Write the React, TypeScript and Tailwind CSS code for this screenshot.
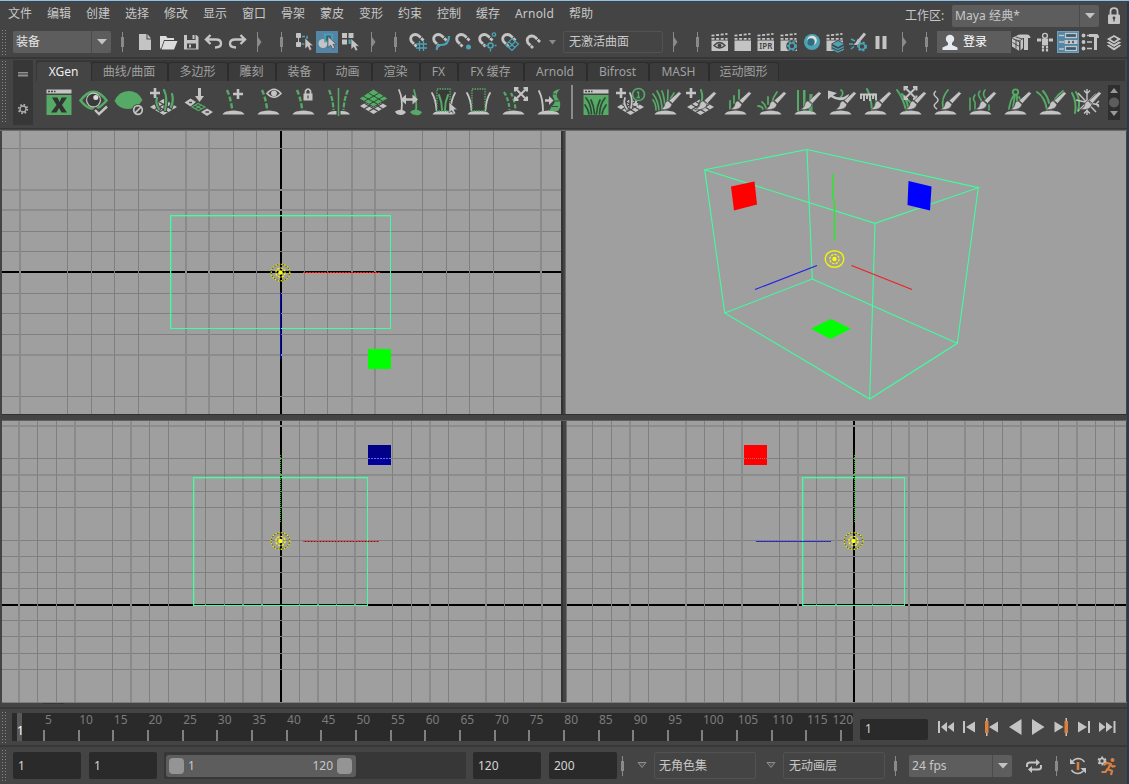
import React from "react";

const G = "#55aa66";
const L = "#c4c4c4";
const T = "#4ba3b5";
const O = "#d9803f";

/* ---------- small building blocks ---------- */

const Grip = () => (
  <svg className="w-[8px] h-full shrink-0" aria-hidden="true">
    <defs>
      <pattern id="grip" width="3" height="3" patternUnits="userSpaceOnUse">
        <rect x="2" y="1" width="1" height="1" fill="#858585" />
      </pattern>
    </defs>
    <rect width="6" height="100%" fill="url(#grip)" />
  </svg>
);

const Divider = () => (
  <svg className="w-[5px] h-[20px] shrink-0" shapeRendering="crispEdges">
    <rect x="2" y="0" width="1" height="20" fill="#8a8a8a" />
    <rect x="1" y="5" width="3" height="10" fill="#8a8a8a" />
  </svg>
);
const Chevron = () => (
  <svg className="w-[5px] h-[20px] shrink-0">
    <rect x="0" y="0" width="1" height="20" fill="#8a8a8a" />
    <path d="M1 5L4.500 10L1 15z" fill="#8a8a8a" />
  </svg>
);
const Slot = ({ children }: { children: React.ReactNode }) => (
  <div className="w-[23px] h-[22px] shrink-0 flex items-center">{children}</div>
);
const DropArrow = () => (
  <div className="w-[20px] h-full border-l border-[#4b4b4b] flex items-center justify-center">
    <svg width="10" height="6"><path d="M0 0H10L5 5.500z" fill="#c4c4c4" /></svg>
  </div>
);

const I = ({ children, on }: { children: React.ReactNode; on?: boolean }) => (
  <Slot>
    <svg width="22" height="22" viewBox="0 0 22 22" fill="none" className={on ? "bg-[#5285a6]" : ""}>{children}</svg>
  </Slot>
);

const Cursor = ({ x, y }: { x: number; y: number }) => (
  <path transform={`translate(${x} ${y})`} d="M0 0V11L2.700 8.600L4.600 12.500L6.800 11.500L5 7.700H8.400z" fill={L} stroke="#444" strokeWidth=".6" />
);
const Magnet = () => (
  <path d="M9.500 15.500L4.500 10.500Q2.500 6.500 5.500 4.300Q9 2.300 12 5L16.500 9.500" stroke={L} strokeWidth="2.800" />
);
const MagnetGaps = () => <path d="M5.800 14.500L9 11.500M12 8.800L15.500 5.500" stroke="#444" strokeWidth="1" />;
const Clap = () => (
  <g>
    <path d="M2.500 4.200L18.500 2.400M2.500 7.400H18.500" stroke={L} strokeWidth="1.800" strokeDasharray="3 1.600" />
    <rect x="2.500" y="9" width="16.500" height="10.500" fill={L} />
  </g>
);
const Gear = ({ x, y, r, c = T }: { x: number; y: number; r: number; c?: string }) => (
  <g transform={`translate(${x} ${y})`}>
    <circle r={r + 1} stroke={c} strokeWidth="2" strokeDasharray="2 1.800" fill="none" />
    <circle r={r} stroke={c} strokeWidth="1.600" fill="#444" />
  </g>
);

/* ---------- top menu ---------- */

const menus = ["文件", "编辑", "创建", "选择", "修改", "显示", "窗口", "骨架", "蒙皮", "变形", "约束", "控制", "缓存", "Arnold", "帮助"];

const MenuBar = () => (
  <div className="h-[25px] flex items-center pl-[8px] pr-[6px] text-[#c8c8c8]">
    <div className="flex gap-[15px] pb-[2px]">
      {menus.map((m) => <span key={m} className={m === "Arnold" ? "w-[39px] tracking-[.2px]" : "w-[24px]"}>{m}</span>)}
    </div>
    <div className="ml-auto flex items-center pt-[3px]">
      <span className="w-[47px]">工作区:</span>
      <div className="w-[147px] h-[22px] bg-[#5d5d5d] rounded-[2px] flex items-center pl-[3px]">
        <span className="flex-1 tracking-[.1px]">Maya 经典*</span>
        <DropArrow />
      </div>
      <svg className="ml-[8px]" width="14" height="18" viewBox="0 0 14 18" fill="none">
        <path d="M3.500 8V4.500Q3.500 1.200 7 1.200T10.500 4.500V8" stroke={L} strokeWidth="1.800" />
        <rect x="1" y="7.500" width="12" height="9.500" rx="1" fill={L} />
        <circle cx="7" cy="11" r="1.400" fill="#444" /><path d="M7 11V14.500" stroke="#444" strokeWidth="1.200" />
      </svg>
    </div>
  </div>
);

/* ---------- status line ---------- */

const StatusLine = () => (
  <div className="h-[30px] flex items-center shrink-0">
    <div className="h-[26px] w-[13px] flex"><Grip /></div>
    <div className="w-[98px] h-[22px] bg-[#5d5d5d] rounded-[2px] flex items-center pl-[3px] text-[#e6e6e6]">
      <span className="flex-1">装备</span>
      <DropArrow />
    </div>
    <div className="w-[22px] flex pl-[9px]"><Divider /></div>
    <I><path d="M6 3H13.500V8.500H18V19H6z" fill={L} /><path d="M14.500 3L18 7.500H14.500z" fill={L} /></I>
    <I><path d="M4 5H10L11.500 7H18V9H8L5 17.500H4z" fill="#dcdcdc" /><path d="M8.500 10H21.500L18 18.500H5.500z" fill="#dcdcdc" /></I>
    <I><path d="M5 4H17.500L19.500 6V18.500H5z" fill={L} /><rect x="8" y="4" width="8.500" height="5" fill="#444" /><rect x="13.500" y="4" width="2" height="4" fill={L} /><rect x="8" y="12.500" width="9" height="5" fill="#444" /><rect x="10" y="13.500" width="2" height="3" fill={L} /></I>
    <I><path d="M8.500 4L4 8.500L8.500 13M4.500 8.500H14Q19 8.500 19 12.500T13 16.500" stroke={L} strokeWidth="2.400" /></I>
    <I><path d="M15.500 4L20 8.500L15.500 13M19.500 8.500H10Q5 8.500 5 12.500T11 16.500" stroke={L} strokeWidth="2.400" /></I>
    <div className="w-[22px] flex pl-[9px]"><Chevron /></div>
    <div className="w-[23px] flex pl-[9px]"><Divider /></div>
    <I>
      <path d="M3.500 2.500H7.500V6.500H3.500zM3.500 11.500H7.500V15.500H3.500z" fill={L} stroke={L} /><path d="M5.500 7V11" stroke={L} />
      <path d="M9 5.500H14V10M8.500 13H12" stroke={T} strokeWidth="1.600" strokeDasharray="3 1.500" /><Cursor x={12} y={7} />
    </I>
    <I on><circle cx="7" cy="12.500" r="4.500" fill={L} /><rect x="9" y="3.500" width="7" height="7" stroke={T} strokeWidth="1.700" fill="#3a6a80" /><Cursor x={12} y={5.5} /></I>
    <I><path d="M3 2H8V7H3zM9.500 2H14.500V7H9.500zM3 8.500H8V13.500H3z" fill={L} /><path d="M9.500 8.500H13V13H9.500z" fill={T} /><Cursor x={12} y={7.5} /></I>
    <div className="w-[22px] flex pl-[9px]"><Chevron /></div>
    <div className="w-[23px] flex pl-[9px]"><Divider /></div>
    <I><Magnet /><MagnetGaps /><path d="M12.500 10V20M16.500 10V20M9 13H20M9 17H20" stroke={T} strokeWidth="1.300" /></I>
    <I><Magnet /><MagnetGaps /><path d="M7 19Q6 14 11 14Q19 14 19 5" stroke={T} strokeWidth="2.200" /></I>
    <I><Magnet /><MagnetGaps /><circle cx="15.500" cy="16" r="2.500" fill={T} /></I>
    <I><Magnet /><MagnetGaps /><circle cx="18" cy="3.500" r="1.700" stroke={T} strokeWidth="1.300" /><circle cx="14.500" cy="14.500" r="2.500" fill="#444" stroke={T} strokeWidth="1.600" /><path d="M14.500 18V20.500M8.500 14.500H11M18.500 14.500H20.500" stroke={T} strokeWidth="1.300" /></I>
    <I><Magnet /><MagnetGaps /><path d="M13 7.500L19.500 13L13 19.500L7 14zM10 11L16 16.500M16.500 10.500L10 16.500" stroke={T} strokeWidth="1.200" /></I>
    <I><g transform="translate(1.500 1.500)"><Magnet /><MagnetGaps /></g></I>
    <div className="w-[18px] flex pl-[4px]"><svg width="8" height="5"><path d="M0 0H7L3.500 4.500z" fill="#8a8a8a" /></svg></div>
    <div className="w-[100px] h-[22px] border border-[#525252] rounded-[2px] flex items-center pl-[5px] text-[#c8c8c8]">无激活曲面</div>
    <div className="w-[25px] flex pl-[10px]"><Chevron /></div>
    <div className="w-[21px] flex pl-[7px]"><Divider /></div>
    <I><g transform="translate(0 .5)"><Clap /><path d="M5 14Q10.500 8 16 14Q10.500 19 5 14z" fill={L} stroke="#444" strokeWidth="1.300" /><circle cx="10.500" cy="14" r="2" fill="#444" /></g></I>
    <I><g transform="translate(0 .5)"><Clap /></g></I>
    <I><g transform="translate(0 .5)"><Clap /><text x="4.300" y="17.500" fontSize="8" fontWeight="600" fill="#444" fontFamily="Noto Sans">IPR</text></g></I>
    <I><g transform="translate(0 .5)"><Clap /><circle cx="14" cy="14.500" r="5.800" fill="#444" /><Gear x={14} y={14.5} r={3} /></g></I>
    <I><circle cx="11" cy="11" r="8" fill={T} /><circle cx="11" cy="9.500" r="4.800" fill="#e0e0e0" /><circle cx="10" cy="11" r="3.700" fill="#2f6f7d" /></I>
    <I><g transform="translate(0 .5)"><Clap /><path d="M7.500 12L14 8.500L20.500 12L20.500 18L14 21.500L7.500 18z" fill="#444" /><path d="M8 12.500L14 9.500L20 12.500L14 15.500z" fill={T} /><path d="M8 15L14 18L20 15M8 17.500L14 20.500L20 17.500" stroke={T} strokeWidth="1.300" /></g></I>
    <I><path d="M18 2.500L12 9.500" stroke={L} strokeWidth="2.800" /><path d="M10.500 8L14 11Q12 15 6 13.500Q9 12.500 10.500 8z" fill={L} /><path d="M4 8L8 10M2 13H6M4 18L7 15.500" stroke={T} strokeWidth="1.600" /><Gear x={15} y={15.5} r={3} /></I>
    <I><path d="M7.500 5V18M14.500 5V18" stroke={L} strokeWidth="4" /></I>
    <div className="w-[22px] flex pl-[9px]"><Chevron /></div>
    <div className="w-[22px] flex pl-[9px]"><Divider /></div>
    <div className="w-[74px] h-[22px] bg-[#5d5d5d] flex items-center gap-[5px] pl-[5px] text-white">
      <svg width="16" height="17" viewBox="0 0 16 17"><circle cx="8" cy="5" r="4.200" fill="#e4e9f2" /><path d="M6 8H10V11L15.500 13.500V16H.5V13.500L6 11z" fill="#e4e9f2" /></svg>
      <span>登录</span>
    </div>
    <I>
      <path d="M1 7L8 3.500L14 5.500L8.500 9.500z" fill={L} /><path d="M1 7V15.500L8.500 20V10.500z" fill={L} /><path d="M1.500 7.500L8.500 11V20M1.500 11.500L8.500 15.500M5 9V17.500M4.500 5.800L11 8" stroke="#444" strokeWidth=".9" />
      <path d="M9.500 9.500L12 8V17L9.500 19.500z" fill={L} />
      <path d="M9 3.500H16Q19 3.500 19.500 7H17V19H13V7H9z" fill={L} />
    </I>
    <I><circle cx="11" cy="4.800" r="2.400" stroke={L} strokeWidth="1.400" /><path d="M3 9H19" stroke={L} strokeWidth="2.800" strokeDasharray="4 .8 6.400 .8 4" /><path d="M8 10H14V14.500H8z" fill={L} /><path d="M9 15V20.500M13 15V20.500" stroke={L} strokeWidth="2.200" strokeDasharray="2.400 .7" /></I>
    <I on><rect x=".5" y=".5" width="21" height="21" stroke="#6da0c0" /><path d="M2 4.500H7M2 11H7M2 18H7" stroke={L} strokeWidth="1.500" /><rect x="8.500" y="2.500" width="11" height="4" fill="#355a72" stroke={L} strokeWidth="1.300" /><rect x="7.500" y="9" width="13" height="4" fill={L} /><path d="M11 10L13 11L11 12M17 10L15 11L17 12" stroke="#444" /><rect x="8.500" y="15.500" width="11" height="4" fill="#355a72" stroke={L} strokeWidth="1.300" /></I>
    <I><g fill={L}><circle cx="3.500" cy="4.500" r="1.900" /><circle cx="3.500" cy="11" r="1.900" /><circle cx="3.500" cy="17.500" r="1.900" /><path d="M9 3H17Q19 3.500 19 7H17V19H14V6H9z" /></g><path d="M7 4.500H10M7 11H12M7 17.500H12" stroke={L} strokeWidth="1.700" /></I>
    <I><path d="M3 14.500L11 10.500L19 14.500L11 20z" fill={L} stroke="#444" /><path d="M3 11.500L11 7L19 11.500L11 16.500z" fill={L} stroke="#444" /><path d="M3 8L11 3.500L19 8L11 13z" fill={L} stroke="#444" /><path d="M7.500 8L11 6L14.500 8L11 10.500z" fill="#444" /></I>
  </div>
);

/* ---------- shelf ---------- */

const tabs: [string, string][] = [
  ["XGen", "w-[54px]"], ["曲线/曲面", "w-[77px]"], ["多边形", "w-[60px]"], ["雕刻", "w-[48px]"], ["装备", "w-[48px]"],
  ["动画", "w-[48px]"], ["渲染", "w-[48px]"], ["FX", "w-[38px]"], ["FX 缓存", "w-[66px]"], ["Arnold", "w-[63px]"],
  ["Bifrost", "w-[62px]"], ["MASH", "w-[60px]"], ["运动图形", "w-[70px]"],
];

const Mound = () => (
  <path d="M6.500 29.500Q8 26.500 12 26.200Q17.500 25 23 26.200Q27 26.500 28.500 29.500z" fill={L} />
);
const Plus = ({ x, y }: { x: number; y: number }) => <path d={`M${x - 5} ${y}H${x + 5}M${x} ${y - 5}V${y + 5}`} stroke={L} strokeWidth="2.600" />;
const Brush = () => (
  <g stroke="#444" strokeWidth=".7">
    <path d="M31 6.500L33.500 8.500L24.500 18.500L21 15.500z" fill={L} />
    <path d="M20 15.800L24 19.300Q23 25.500 11.500 24.800Q16.500 23 17 18.500Q18 16 20 15.800z" fill={L} />
  </g>
);
const Blades = ({ d, c = G, w = 2 }: { d: string; c?: string; w?: number }) => <path d={d} stroke={c} strokeWidth={w} strokeLinecap="round" />;
const Patch = ({ y = 22, c = L }: { y?: number; c?: string }) => (
  <g transform={`translate(17.500 ${y})`}>
    <path d="M0 -8L13.500 0L0 8L-13.500 0z" fill={c} />
    <path d="M-9 -2.700L4.500 5.300M-4.500 -5.300L9 2.700M9 -2.700L-4.500 5.300M4.500 -5.300L-9 2.700" stroke="#444" strokeWidth="1.300" />
  </g>
);
const Dashed = () => <path d="M11 5Q15 14 16 24" stroke={G} strokeWidth="2.400" strokeDasharray="5 2" />;
const Window = ({ children }: { children: React.ReactNode }) => (
  <g><rect x="5.500" y="4.500" width="25" height="4" fill={L} /><path d="M7 6.500H14.500" stroke="#444" strokeWidth="1.500" strokeDasharray="2 1" /><rect x="5.500" y="10" width="25" height="20" fill={G} />{children}</g>
);
const Spread = ({ x, y }: { x: number; y: number }) => (
  <g transform={`translate(${x} ${y})`} stroke={L}><path d="M-5 -5L5 5M5 -5L-5 5" strokeWidth="2" /><path d="M-6 -2.500V-6H-2.500M2.500 -6H6V-2.500M6 2.500V6H2.500M-2.500 6H-6V2.500" strokeWidth="2" /></g>
);
const Sides = () => <Blades c={L} d="M6 8Q10 15 10.500 25M29 8Q25 15 24.500 25" w={1.8} />;

const shelfA: React.ReactNode[] = [
  <Window key="w"><path d="M11 12.500H16.500L18.500 17L20.500 12.500H26L21 20L26 27.500H20.500L18 23L15.500 27.500H10L15.500 20z" fill="#333" /></Window>,
  <g><path d="M4.500 15.500Q17.500 -2 30.500 15.500Q17.500 32 4.500 15.500z" stroke={G} strokeWidth="2.600" /><circle cx="17.500" cy="15" r="7.500" fill={L} /><circle cx="17.500" cy="15" r="6.300" fill="#3a3a3a" /><circle cx="19.800" cy="12.500" r="2.500" fill="#ddd" /><path d="M18 23.500L23 28.500L31 20.500" stroke="#444" strokeWidth="5" /><path d="M19 25L23 29L31 21.500" stroke={L} strokeWidth="2.400" /></g>,
  <g><path d="M3.500 16Q8 6 17.500 6T31.500 15Q26 24 17 24T3.500 16z" fill={G} /><circle cx="27" cy="25" r="6" fill="#444" /><circle cx="27" cy="25" r="4.300" stroke={L} strokeWidth="1.700" /><path d="M24 28L30 22" stroke={L} strokeWidth="1.700" /></g>,
  <g><Patch y={22} /><Blades w={4} d="M13 24Q9 18 11 13M19 25Q22 13 18 5M25 22Q28 15 26 9" c="#444" /><Blades w={2.2} d="M13 24Q9 18 11 13M19 25Q22 13 18 5M25 22Q28 15 26 9" /><Plus x={9} y={8} /></g>,
  <g><path d="M18.500 3V13" stroke={L} strokeWidth="3" /><path d="M14 11H23L18.500 17z" fill={L} /><path d="M3.500 17.500L9.500 13.500L15 17L9.500 21.500zM20 27L26 23.500L32 27L26 31z" fill={L} /><path d="M8 17.500H11M24.500 27H28" stroke="#444" strokeWidth="1.500" /><path d="M11 22L17 18.500L24 22L17.500 25.500zM14 20L21 24M20 20L14 24" stroke={G} strokeWidth="1.200" /></g>,
  <g><Mound /><Dashed /><Plus x={22} y={9} /></g>,
  <g><Mound /><Dashed /><path d="M16 8.500Q23 0 30 8.500Q23 16 16 8.500z" stroke={L} strokeWidth="1.600" /><circle cx="23" cy="8.300" r="2.900" fill={L} /></g>,
  <g><Mound /><Dashed /><path d="M19.500 9V6Q22 2 24.500 6V9" stroke={L} strokeWidth="1.700" /><rect x="17.500" y="8.500" width="9" height="7" fill={L} /><path d="M22 10.500V13.500" stroke="#444" strokeWidth="1.200" /></g>,
  <g><path d="M6 29.500Q8 25.500 15.500 26V29.500zM19.500 26Q27 25.500 29 29.500H19.500z" fill={L} /><path d="M17.500 3V31" stroke={G} strokeWidth="1.500" /><path d="M8 5Q12 14 12.500 25M27 5Q23 14 22.500 25" stroke={G} strokeWidth="2.200" strokeDasharray="5 1.500" /></g>,
  <g><Patch y={21} /><path d="M17.500 4L32 13.500L17.500 22L3 13.500z" fill={G} stroke="#444" /><path d="M7 11L22 19.500M12.500 8L27 16.500M23 8L8 16.500M28 11L13 19.500" stroke="#294d32" strokeWidth="1" /></g>,
  <g><Blades c={L} d="M8 5Q12 14 10.500 26" w={1.8} /><Blades d="M23 5Q26 15 25 26" w={1.8} /><path d="M4 26.500Q10 23 15 27Q13 30.500 9 30Q5 29.500 4 26.500z" fill={L} /><path d="M19 27Q24 22 31 27Q29 31 25 30Q21 30 19 27z" fill={G} /><path d="M12 14.500H24" stroke={L} strokeWidth="2.500" /><path d="M15 9.500V19.500L9.500 14.500zM21.500 9.500V19.500L27 14.500z" fill={L} /></g>,
  <g><Mound /><Sides /><rect x="11" y="4" width="13" height="22" stroke={G} strokeWidth="1.300" strokeDasharray="1.500 1" fill="#3a3a3a" /><Blades d="M13 10Q16 17 16 25M22 10Q19 17 19 25" /><Cursor x={23} y={17} /></g>,
  <g><Mound /><Sides /><rect x="11" y="4" width="13" height="22" stroke={G} strokeWidth="1.300" strokeDasharray="1.500 1" fill="#3f3f3f" /></g>,
  <g><Mound /><path d="M8 7Q13 15 13.500 25M15 8Q19 16 19.500 25" stroke={G} strokeWidth="2.200" strokeDasharray="4 2" /><Spread x={25} y={9} /></g>,
  <g><Mound /><Blades c={L} d="M8 6Q12 14 12 26" w={1.8} /><path d="M14 15.500H19" stroke={L} strokeWidth="2.500" /><path d="M18 11V20L22.500 15.500z" fill={L} /><path d="M29 4Q20 5 22 12Q26 17 21 21L18 26H27Q32 19 26.500 13Q24 9 29 4z" fill={G} /><path d="M21.500 9H25M24 16H28M21 21.500H27" stroke="#444" /></g>,
];

const shelfB: React.ReactNode[] = [
  <Window key="w"><Blades c="#2f4a36" w={1.7} d="M8 13Q13 19 13.500 29M27 13Q22 19 21.500 29M13 15Q16 21 16.500 29M22 15Q19 21 18.500 29M7 20Q10 24 11 29M28 20Q25 24 24 29" /></Window>,
  <g><Patch /><Blades c="#444" w={3.5} d="M14 24Q11 18 13 13M18 23V9" /><Blades c={L} w={1.8} d="M14 24Q10 18 12 13M18 23Q20 14 17 8M25 22Q21 18 24 15" /><Plus x={8} y={8} /><circle cx="25.500" cy="9.500" r="6" fill="#444" stroke={G} strokeWidth="1.700" /><path d="M25.500 6.500V12.500M23.500 12.500H27M24 7.500L25.500 6.500" stroke={G} strokeWidth="1.400" /></g>,
  <g><Mound /><Blades w={1.7} d="M5 9Q10 15 11 25M9 6Q14 14 14 25M14 6Q17 14 17 25M20 5Q20 14 19 20M26 8Q23 12 22 16M5 15Q8 19 8 25" /><Brush /></g>,
  <g><Patch /><Blades c="#444" w={4} d="M17 20Q21 14 17 7" /><Blades d="M17 20Q21 13 18 5" /><Plus x={8} y={8} /><Brush /></g>,
  <g><Mound /><Blades w={1.8} d="M12 16V24M16 11V18M21 5V14" /><Brush /></g>,
  <g><Mound /><Blades w={1.8} d="M5 21Q9 21 10 24M9 17Q12 19 13 23M15 12V19M24 7Q20 12 19 18" /><Brush /></g>,
  <g><Mound /><path d="M9 5H11V26H9zM15 5H17.500V26H15zM21.500 9H24.500V26H20.500z" fill={G} /><Brush /></g>,
  <g><Mound /><Blades w={1.8} d="M18 5Q22 8 17 13" /><path d="M5 5.500L14 8L10 10.500Q18 15 26 9L25 13Q16 18 8 12L5 14.500z" fill={L} /><Brush /></g>,
  <g><Mound /><Blades d="M9 4Q13 12 14 25M16 9Q19 12 18 20" /><path d="M2 9.500H19M3 10V14M6 10V16M9 10V14M12 10V16M15 10V14M18 10V15" stroke={L} strokeWidth="1.900" /><Brush /></g>,
  <g><Mound /><Blades d="M4 5Q10 13 13 25M9 9Q14 15 15 22M15 15L19 19" /><Spread x={17.5} y={8} /><Brush /></g>,
  <g><Mound /><path d="M8 6Q4 9 8 12T8 18T9 24" stroke={L} strokeWidth="1.500" /><Blades d="M20 5Q13 13 15 23" w={1.8} /><Brush /></g>,
  <g><Mound /><Blades w={1.6} d="M7 13V25M12 10Q9 14 12 17V25M17 6Q14 9 17 13T17 20M22 5Q19 9 22 13M26 20V25" /><Brush /></g>,
  <g><Mound /><circle cx="17.500" cy="7" r="2.700" stroke={G} strokeWidth="1.800" /><Blades w={1.8} d="M16 10Q12 16 11 24M19 10Q19 14 19 18M17 10L15 22M21 12L23 16" /><Brush /></g>,
  <g><Mound /><Blades d="M4 7Q12 12 14 25M10 6Q15 12 16 18M30 6Q20 13 20 22" /><Brush /></g>,
  <g><Blades d="M4 8Q9 17 7 28M8 7Q13 15 10 26" /><path d="M19 4V30M8 15L31 20M10 8L28 27M28 9L10 26M16 5.500L19 8.500L22 5.500M16 28.500L19 25.500L22 28.500M31 16L28 19L31 22" stroke={L} strokeWidth="1.400" /><Brush /></g>,
];

const ShelfIcon = ({ children }: { children: React.ReactNode }) => (
  <svg width="35" height="34" viewBox="0 0 35 34" fill="none" className="shrink-0">{children}</svg>
);

const Shelf = () => (
  <div className="h-[69px] flex shrink-0 pt-[1px]">
    <div className="w-[13px] h-[64px]"><Grip /></div>
    <div className="w-[20px] h-[65px] bg-[#373737] flex flex-col items-center pt-[12px]">
      <svg width="10" height="5"><path d="M0 .5H10M0 3.500H10" stroke="#8f8f8f" strokeWidth="2" /></svg>
      <svg className="mt-[25px]" width="14" height="14" viewBox="0 0 14 14" fill="none"><circle cx="7" cy="7" r="4.300" stroke="#b0b0b0" strokeWidth="1.800" strokeDasharray="1.600 1.777" /><circle cx="7" cy="7" r="3" stroke="#b0b0b0" strokeWidth="1.300" /></svg>
    </div>
    <div className="w-[1089px] ml-[3px] flex flex-col">
      <div className="h-[21px] flex bg-[#373737] pl-[1px] items-end">
        {tabs.map(([t, w], i) => (
          <div key={t} className={`${w} shrink-0 h-[19px] flex items-center justify-center pr-[1px] rounded-t-[3px] ${i === 0 ? "bg-[#444] text-[#eee]" : "border border-b-0 border-[#2c2c2c] bg-[#3b3b3b] text-[#a0a0a0]"}`}>{t}</div>
        ))}
      </div>
      <div className="h-[44px] flex pt-[4px] pl-[4.500px]">
        {shelfA.map((s, i) => <ShelfIcon key={i}>{s}</ShelfIcon>)}
        <div className="w-[12px] shrink-0 flex justify-center"><div className="w-[2px] h-[34px] bg-[#8b8b8b]" /></div>
        {shelfB.map((s, i) => <ShelfIcon key={i}>{s}</ShelfIcon>)}
        <div className="ml-[5.500px] w-[12px] h-[35px] bg-[#2e2e2e] shrink-0">
          <svg width="12" height="35"><path d="M2 8L6 3L10 8z" fill="#999" /><circle cx="6" cy="17.500" r="5" fill="#5d5d5d" /><path d="M2 26L6 31L10 26z" fill="#999" /></svg>
        </div>
      </div>
    </div>
  </div>
);

/* ---------- viewports ---------- */

type GridProps = { box: [number, number, number, number]; vThin: number[]; vThick: number[]; hThin: number[]; hThick: number[]; ax: number; ay: number; children?: React.ReactNode };

const Viewport = ({ box: [x, y, w, h], vThin, vThick, hThin, hThick, ax, ay, children }: GridProps) => (
  <svg width={w} height={h} viewBox={`${x} ${y} ${w} ${h}`} className="block shrink-0 bg-[#9f9f9f]" fill="none" shapeRendering="crispEdges">
    <rect x={x} y={ay - 1} width={w} height="2" fill="#000" />
    <rect x={ax - 1} y={y} width="2" height={h} fill="#000" />
    {hThin.map((v) => <rect key={v} x={x} y={v} width={w} height="1" fill="#7f7f7f" />)}
    {hThick.map((v) => <rect key={v} x={x} y={v} width={w} height="2" fill="#8c8c8c" />)}
    {vThin.map((v) => <rect key={v} x={v} y={y} width="1" height={h} fill="#7f7f7f" />)}
    {vThick.map((v) => <rect key={v} x={v} y={y} width="2" height={h} fill="#8a8a8a" />)}
    {children}
  </svg>
);

const M = "#3cff9f";

/* Bounding box outline with a faint inner edge along its top and left sides. */
const Bounds = ({ x, y, w, h }: { x: number; y: number; w: number; h: number }) => (
  <g stroke={M}>
    <path d={`M${x + 1.5} ${y + h - 0.5}V${y + 1.5}H${x + w - 0.5}`} opacity=".35" />
    <rect x={x + 0.5} y={y + 0.5} width={w} height={h} />
  </g>
);

const Target = ({ x, y, solid }: { x: number; y: number; solid?: boolean }) => (
  <g transform={`translate(${x} ${y})`} stroke="#f2f20a" fill="none" shapeRendering="auto">
    {!solid && <ellipse rx="9.200" ry="8.200" stroke="#55551a" />}
    <ellipse rx="9.300" ry="8.300" strokeWidth={solid ? 1.4 : 1.2} strokeDasharray={solid ? undefined : "1.500 1.500"} />
    <circle r="4.600" strokeDasharray="2.500 1" strokeWidth="1.300" />
    <circle r="2.200" fill="#ffff00" stroke="none" />
  </g>
);

const TopView = () => (
  <Viewport box={[2, 131, 559, 283]} ax={281} ay={272}
    vThin={[67, 91, 114, 138, 233, 256, 304, 327, 422, 446, 469, 493]} vThick={[19, 185, 208, 351, 374, 540]}
    hThin={[148, 231, 251, 293, 313, 334, 396]} hThick={[189, 209, 354]}>
    <Bounds x={170} y={215} w={220} h={113} />
    <path d="M303 272.500H380" stroke="#5a0000" /><path d="M303 272.500H380" stroke="#ff1010" strokeDasharray="2 1" />
    <path d="M280.500 292V359" stroke="#0000f0" />
    <rect x="368" y="349" width="23" height="20" fill="#00ff00" />
    <Target x={280.5} y={272.5} />
  </Viewport>
);

const PerspView = () => (
  <svg width="560" height="283" viewBox="566 131 560 283" className="block shrink-0 bg-[#9f9f9f]" fill="none">
    <path d="M704.700 169.700L807 149.500L978.300 187.700L875 223.300L704.700 169.700L724.700 313L869.700 399L957.300 343.300L978.300 187.700M807 149.500L812.300 279L724.700 313M812.300 279L957.300 343.300M875 223.300L869.700 399" stroke={M} strokeWidth="1.100" />
    <path d="M731 186.500L754.500 181.500L757 204.500L734 210.500z" fill="#ff0000" />
    <path d="M908.500 181L931.500 186.500L930 210.500L907.500 205z" fill="#0000ff" />
    <path d="M811 328.800L831 319L851 328.800L830.500 339z" fill="#00ff00" />
    <path d="M833 174V200L834.400 202V241" stroke="#1ef01e" strokeWidth="1.300" />
    <path d="M755 289.500L817 265.500" stroke="#2020e8" strokeWidth="1.100" />
    <path d="M851.500 265.500L912 289.500" stroke="#ee2020" strokeWidth="1.100" />
    <Target x={834.5} y={259} solid />
  </svg>
);

const H3Thin = [458, 491, 507, 540, 556, 572, 588, 620, 636, 653, 669];

const FrontView = () => (
  <Viewport box={[2, 421, 559, 281]} ax={281} ay={605}
    vThin={[37, 56, 112, 149, 168, 205, 224, 299, 336, 392, 411, 448, 504, 523]} vThick={[18, 74, 130, 242, 261, 317, 354, 429, 485, 541]}
    hThin={H3Thin} hThick={[425, 474]}>
    <Bounds x={193} y={477} w={174} h={128} />
    <path d="M280.500 455V522" stroke="#00d800" strokeDasharray="1 1" />
    <path d="M303 541.500H379" stroke="#5a2424" /><path d="M303 541.500H379" stroke="#ee3030" strokeDasharray="2 1" />
    <rect x="368" y="445" width="23" height="20" fill="#000088" />
    <path d="M368 458.500H391" stroke="#6a6aff" strokeDasharray="2 1" />
    <path d="M368 462.500H391M369 464.500H391M376 459.500H388" stroke="#0000dd" strokeDasharray="1 1" />
    <Target x={280.5} y={541} />
  </Viewport>
);

const SideView = () => (
  <Viewport box={[567, 421, 559, 281]} ax={854} ay={605}
    vThin={[592, 611, 648, 704, 723, 779, 816, 872, 891, 927, 983, 1002, 1058, 1095, 1114]} vThick={[629, 685, 741, 797, 835, 908, 964, 1020, 1076]}
    hThin={H3Thin} hThick={[425, 474]}>
    <Bounds x={802} y={477} w={102} h={128} />
    <path d="M854.500 455V522" stroke="#00d800" strokeDasharray="1 1" />
    <path d="M756 541.500H831" stroke="#22229a" /><path d="M756 541.500H831" stroke="#3030e0" strokeDasharray="2 1" />
    <rect x="744" y="445" width="23" height="20" fill="#ff0000" />
    <path d="M744 458.500H767" stroke="#b07070" strokeDasharray="1 1" />
    <Target x={853.5} y={541} />
  </Viewport>
);

/* ---------- time controls ---------- */

const frames = Array.from({ length: 23 }, (_, i) => (i + 1) * 5);

const Timeline = () => (
  <div className="w-[841px] h-[28px] bg-[#2a2a2a] flex text-[#7c7c7c] leading-[14px]">
    <div className="w-[31px] shrink-0 h-full flex pl-[5px]">
      <div className="w-[5px] h-full bg-[#585858] text-white pt-[11px]">1</div>
    </div>
    {frames.map((f) => (
      <div key={f} className="w-[34.660px] shrink-0 h-full flex flex-col justify-between">
        <span className={f === 5 ? "pl-[2px]" : "pl-[1.500px]"}>{f}</span>
        <div className="w-[2px] h-[11px] bg-[#808080]" />
      </div>
    ))}
    <div className="w-[13px] shrink-0 h-full flex flex-col justify-between">
      <span className="self-end">120</span>
      <div className="w-[2px] h-[11px] bg-[#808080]" />
    </div>
  </div>
);

const P = ({ children }: { children: React.ReactNode }) => (
  <div className="w-[23px] shrink-0 flex"><svg width="20" height="18" viewBox="0 0 20 18" fill={L}>{children}</svg></div>
);

const PlayRow = () => (
  <div className="h-[36px] flex items-center shrink-0">
    <div className="w-[12px] h-[32px]"><Grip /></div>
    <Timeline />
    <div className="ml-[7px] mt-[4px] w-[68px] h-[21px] bg-[#2a2a2a] rounded-[2px] flex items-center pl-[5px] text-[#d4d4d4]">1</div>
    <div className="flex ml-[8px]">
      <P><path d="M2 3H4V15H2zM11 4V14L5 9zM18 4V14L11.500 9z" /></P>
      <P><path d="M4 3H6V15H4zM16 3.500V14.500L7 9z" /></P>
      <P><path d="M4 0H5.500V18H4z" /><rect x="3" y="3" width="3.500" height="12" fill={O} /><path d="M16 3.500V14.500L7 9z" /></P>
      <P><path d="M16.500 1V17L4 9z" /></P>
      <P><path d="M4 1V17L16.500 9z" /></P>
      <P><path d="M14.500 0H16V18H14.500z" /><rect x="13.500" y="3" width="3.500" height="12" fill={O} /><path d="M3.500 3.500V14.500L12.500 9z" /></P>
      <P><path d="M14 3H16V15H14zM4 3.500V14.500L13 9z" /></P>
      <P><path d="M16.500 3H18.500V15H16.500zM2 4V14L8.500 9zM9 4V14L15.500 9z" /></P>
    </div>
  </div>
);

const NumField = ({ v }: { v: string }) => (
  <div className="w-[68px] h-[27px] bg-[#2a2a2a] rounded-[2px] flex items-center pl-[5px] text-[#d4d4d4]">{v}</div>
);
const HollowTri = () => (
  <svg width="10" height="7" viewBox="0 0 10 7" fill="#555"><path d="M1 .5H9L5 5.500z" stroke="#8d8d8d" /></svg>
);

const RangeRow = () => (
  <div className="h-[37px] flex items-center shrink-0 text-[#c8c8c8]">
    <div className="w-[13px] h-[34px]"><Grip /></div>
    <NumField v="1" />
    <div className="w-[8px]" />
    <NumField v="1" />
    <div className="ml-[7px] w-[302px] h-[27px] bg-[#373737] flex items-center pl-[2px]">
      <div className="w-[190px] h-[22px] bg-[#5d5d5d] rounded-[3px] flex items-center pl-[3px] pr-[4px] gap-[4px]">
        <div className="w-[15px] h-[16px] rounded-[4px] bg-[#949494]" />
        <span className="flex-1">1</span>
        <span>120</span>
        <div className="w-[15px] h-[16px] rounded-[4px] bg-[#949494]" />
      </div>
    </div>
    <div className="w-[7px]" />
    <NumField v="120" />
    <div className="w-[8px]" />
    <NumField v="200" />
    <div className="ml-[3px]"><Divider /></div>
    <div className="w-[29px] flex pl-[12px]"><HollowTri /></div>
    <div className="w-[102px] h-[27px] border border-[#525252] rounded-[2px] flex items-center pl-[4px]">无角色集</div>
    <div className="w-[27px] flex pl-[10px]"><HollowTri /></div>
    <div className="w-[102px] h-[27px] border border-[#525252] rounded-[2px] flex items-center pl-[5px]">无动画层</div>
    <div className="w-[24px] flex pl-[8px]"><Divider /></div>
    <div className="w-[103px] h-[22px] bg-[#5d5d5d] rounded-[2px] flex items-center pl-[3px]">
      <span className="flex-1 tracking-[.1px]">24 fps</span><DropArrow />
    </div>
    <div className="w-[42px] flex pl-[13px]">
      <svg width="18" height="14" viewBox="0 0 18 14" fill="none" stroke={L} strokeWidth="2"><path d="M12 3.500H5Q2 3.500 2 6V8M6 10.500H13Q16 10.500 16 8V6" /><path d="M11 0L15 3.500L11 7zM7 7L3 10.500L7 14z" fill={L} stroke="none" /></svg>
    </div>
    <Divider />
    <div className="w-[38px] flex pl-[10px]">
      <svg width="18" height="18" viewBox="0 0 18 18" fill="none"><path d="M2 7Q4 2 9 1.500Q13 1.500 15.500 5M16 11Q14 16 9 16.500Q5 16.500 2.500 13" stroke={L} strokeWidth="1.500" /><path d="M1 1.500V7H6.500zM17 16.500V11H11.500z" fill={L} /><path d="M9 5V13" stroke={O} strokeWidth="2.500" /></svg>
    </div>
    <svg width="20" height="20" viewBox="0 0 20 20" fill="none"><Gear x={5} y={5} r={2.5} c={L} /><circle cx="15.500" cy="4" r="2" fill={O} /><path d="M6.500 9L10 7L13.500 8L11 13L15 15L14 19M11 12.500L8.500 16H4.500M13.500 8.500L15.500 10.500L18.500 10" stroke={O} strokeWidth="2.200" /></svg>
  </div>
);

/* ---------- window ---------- */

export default function App() {
  return (
    <div className="w-[1129px] h-[784px] overflow-hidden bg-[#444] flex flex-col text-[12px] leading-none whitespace-nowrap font-['Noto_Sans','Noto_Sans_CJK_SC',sans-serif]">
      <div className="h-[2px] shrink-0 bg-[#9dbdd6] border-b border-[#2d4658]" />
      <div className="flex-1 flex min-h-0">
        <div className="w-[1127px] h-[782px] flex flex-col">
          <MenuBar />
          <StatusLine />
          <div className="h-[2px] bg-[#363636] shrink-0" />
          <Shelf />
          <div className="h-[3px] border-t border-[#353535] border-b border-b-[#6b6b6b] shrink-0" />
          <div className="h-[573px] shrink-0 flex flex-col pl-[2px]">
            <div className="flex">
              <TopView />
              <div className="w-[5px] border-l-2 border-[#333] border-r border-r-[#6b6b6b]" />
              <PerspView />
            </div>
            <div className="h-[7px] border-y border-t-[#303030] border-b-[#606060]" />
            <div className="flex">
              <FrontView />
              <div className="w-[6px] border-l-2 border-[#333] border-r border-r-[#6b6b6b]" />
              <SideView />
            </div>
            <div className="flex h-[2px] border-t border-[#7d7d7d]"><div className="w-[41px]" /><div className="w-[21px] bg-[#373737]" /></div>
          </div>
          <div className="h-[5px] border-b-2 border-[#383838] shrink-0" />
          <PlayRow />
          <div className="h-[2px] bg-[#383838] shrink-0" />
          <RangeRow />
        </div>
        <div className="w-[2px] bg-[#203a4e]" />
      </div>
    </div>
  );
}
